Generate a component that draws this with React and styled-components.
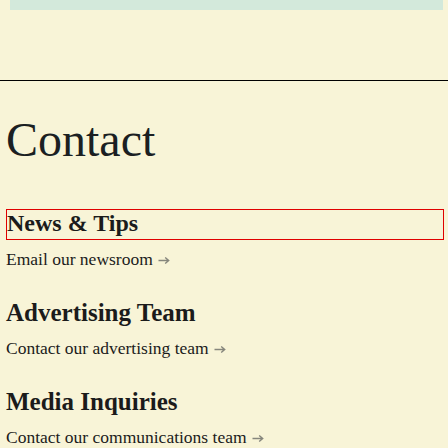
import React from "react";
import styled, { createGlobalStyle } from "styled-components";

const Global = createGlobalStyle`
  html, body { margin: 0; padding: 0; background: #f8f4d7; }
  body { font-family: "Liberation Serif", "Times New Roman", serif; color: #1b1b1b; }
`;

const Page = styled.div`
  width: 448px;
  min-height: 448px;
  background: #f8f4d7;
  overflow: hidden;
`;

const TopBar = styled.div`
  height: 10px;
  margin: 0 5px 0 10px;
  background: #d3e9db;
`;

const Masthead = styled.header`
  height: 70px;
  border-bottom: 1px solid #000;
`;

const Main = styled.main`
  padding: 0 4px 0 6px;
`;

const Title = styled.h1`
  margin: 31px 0 0;
  font-size: 48px;
  line-height: 56px;
  font-weight: 400;
  color: #1b1f22;
`;

const Sections = styled.div`
  margin-top: 41px;
  display: flex;
  flex-direction: column;
  gap: 27px;
`;

const Section = styled.section`
  display: flex;
  flex-direction: column;
  gap: ${(p) => (p.$outlined ? "7px" : "8px")};
`;

const Heading = styled.h2`
  margin: 0;
  font-weight: 700;
  color: #1b1b1b;
  font-size: ${(p) => (p.$outlined ? "24px" : "25px")};
  line-height: ${(p) => (p.$outlined ? "27px" : "30px")};
  border: ${(p) => (p.$outlined ? "1px solid #e00000" : "none")};
  padding-bottom: ${(p) => (p.$outlined ? "2px" : "0")};
`;

const LinkRow = styled.a`
  display: flex;
  align-items: center;
  gap: 5px;
  font-size: 17.5px;
  line-height: 24px;
  color: #1b1b1b;
  text-decoration: none;
`;

const Arrow = styled.svg`
  width: 12px;
  height: 9px;
  margin-top: 2px;
  flex: none;
`;

const ArrowIcon = () => (
  <Arrow viewBox="0 0 12 9">
    <path d="M0.5 4.5H10.5M7.2 1.5L10.7 4.5L7.2 7.5" fill="none" stroke="#86867c" strokeWidth="1.4" />
  </Arrow>
);

const items = [
  { title: "News & Tips", link: "Email our newsroom", outlined: true },
  { title: "Advertising Team", link: "Contact our advertising team" },
  { title: "Media Inquiries", link: "Contact our communications team" },
];

export default function App() {
  return (
    <Page>
      <Global />
      <TopBar />
      <Masthead />
      <Main>
        <Title>Contact</Title>
        <Sections>
          {items.map((it) => (
            <Section key={it.title} $outlined={it.outlined}>
              <Heading $outlined={it.outlined}>{it.title}</Heading>
              <LinkRow href="#">
                {it.link}
                <ArrowIcon />
              </LinkRow>
            </Section>
          ))}
        </Sections>
      </Main>
    </Page>
  );
}
